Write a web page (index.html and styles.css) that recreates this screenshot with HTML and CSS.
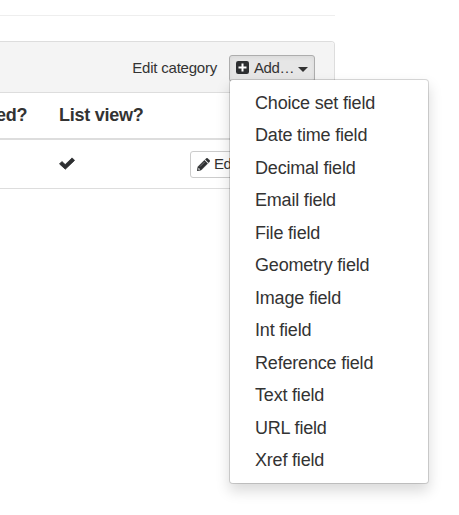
FILE: index.html
```html
<!DOCTYPE html>
<html lang="en">
<head>
<meta charset="utf-8">
<title>Fields</title>
<link rel="stylesheet" href="styles.css">
</head>
<body>
<main class="page">
  <hr class="rule">
  <section class="panel">
    <header class="panel-heading">
      <a class="edit-link">Edit category</a>
      <div class="dropdown">
        <button class="btn btn-add">
          <svg class="icon-plus" viewBox="0 0 13 13"><rect width="13" height="13" rx="2.2" fill="#2d2f31"/><path d="M6.5 2.5v8M2.5 6.5h8" stroke="#fff" stroke-width="2"/></svg>
          <span>Add…</span>
          <i class="caret"></i>
        </button>
        <ul class="menu">
          <li>Choice set field</li>
          <li>Date time field</li>
          <li>Decimal field</li>
          <li>Email field</li>
          <li>File field</li>
          <li>Geometry field</li>
          <li>Image field</li>
          <li>Int field</li>
          <li>Reference field</li>
          <li>Text field</li>
          <li>URL field</li>
          <li>Xref field</li>
        </ul>
      </div>
    </header>
    <div class="row row-head">
      <span class="col-first">ed?</span>
      <span>List view?</span>
    </div>
    <div class="row row-body">
      <span class="col-first"></span>
      <svg class="icon-check" viewBox="0 0 16 12"><path d="M0.5 6.4L2.9 4L6.2 7.1L13.1 0.4L15.6 2.9L6.3 11.7Z" fill="#2d2f31" stroke="#2d2f31" stroke-width=".8" stroke-linejoin="round"/></svg>
      <button class="btn btn-edit">
        <svg class="icon-pencil" viewBox="0 0 13 13"><path d="M0 13L.9 8.8L7.4 2.3L10.7 5.6L4.2 12.1Z M8.2 1.5L9.3.4Q10-.3 10.7.4L12.6 2.3Q13.3 3 12.6 3.7L11.5 4.8Z" fill="#2d2f31" stroke="#2d2f31" stroke-width=".4"/><path d="M1.6 9.8L3.2 11.4L1.3 11.8Z" fill="#fff"/><path d="M3 8.6L7.6 4" stroke="#aaa" stroke-width=".6"/></svg>
        <span>Edit</span>
      </button>
    </div>
  </section>
</main>
</body>
</html>
```
FILE: styles.css
```css
* { box-sizing: border-box; }
body {
  margin: 0;
  min-height: 515px;
  background: #fff;
  color: #333;
  font: 18px/26px "Liberation Sans", Arial, sans-serif;
  letter-spacing: -.19px;
}
.page { width: 335px; padding-top: 15px; }
.rule { margin: 0 0 25px; border: 0; border-top: 1px solid #eee; }
.panel {
  height: 148px;
  border: 1px solid #ddd;
  border-left: 0;
  border-radius: 0 4px 0 0;
}
.panel-heading {
  display: flex;
  justify-content: flex-end;
  align-items: center;
  height: 51px;
  padding: 2px 19px 0 0;
  gap: 12px;
  background: #f4f4f4;
  border-bottom: 1px solid #ddd;
  border-radius: 0 3px 0 0;
}
.edit-link { font-size: 15px; line-height: 22px; letter-spacing: -.22px; }
.dropdown { position: relative; }
.btn {
  display: flex;
  align-items: center;
  height: 27px;
  padding: 0 6px;
  border: 1px solid #ccc;
  border-radius: 3px;
  background: #fff;
  color: #333;
  font: 15px/22px "Liberation Sans", Arial, sans-serif;
  letter-spacing: -.4px;
}
.btn-add {
  width: 86px;
  background: #e6e6e6;
  border-color: #adadad;
  box-shadow: inset 0 2px 4px rgba(0, 0, 0, .05);
}
.icon-plus { width: 13px; height: 13px; flex: none; margin: 0 5px 2px 0; }
.caret {
  margin: 3px 0 0 auto;
  border: 5px solid transparent;
  border-top-color: #333;
  border-bottom: 0;
}
.menu {
  position: absolute;
  z-index: 2;
  top: 24px;
  left: 0;
  width: 200px;
  height: 405px;
  margin: 0;
  padding: 7px 0;
  list-style: none;
  background: #fff;
  background-clip: padding-box;
  border: 1px solid rgba(0, 0, 0, .15);
  border-radius: 4px;
  box-shadow: 0 7px 14px rgba(0, 0, 0, .15);
}
.menu li {
  height: 32.5px;
  padding-left: 25px;
  line-height: 32.5px;
}
.row { display: flex; align-items: center; }
.row-head {
  height: 47px;
  padding-bottom: 2px;
  border-bottom: 2px solid #ddd;
  font-weight: bold;
  letter-spacing: -.25px;
}
.row-body { height: 48px; }
.col-first { width: 59px; margin-left: -4px; margin-right: 4px; }
.icon-check { width: 16px; height: 13px; margin-top: -2px; }
.btn-edit { width: 62px; margin-left: 115px; gap: 4px; }
.icon-pencil { width: 13px; height: 13px; flex: none; }
```
